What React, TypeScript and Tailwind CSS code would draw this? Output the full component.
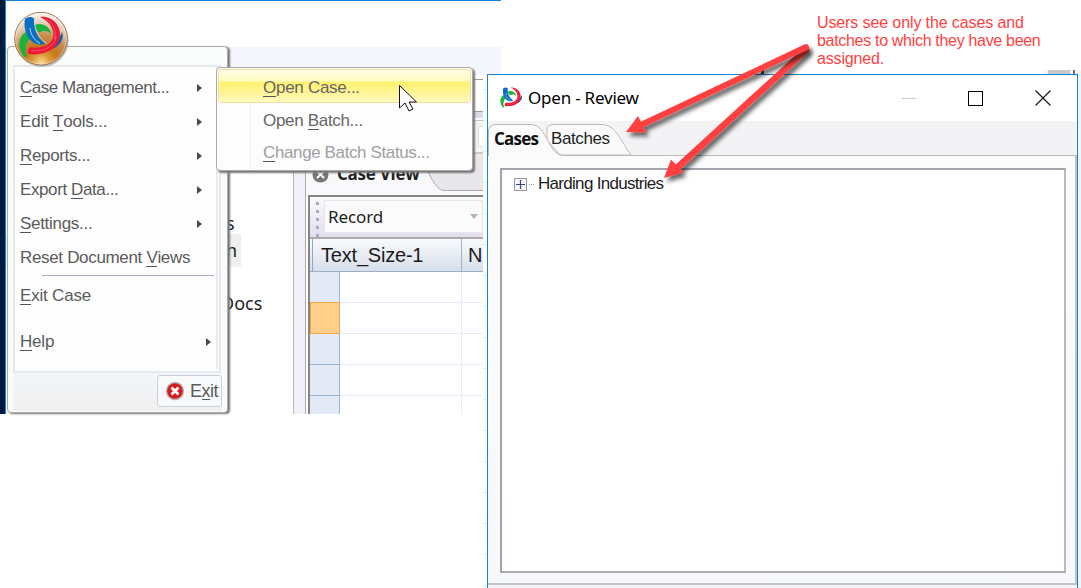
import React from "react";

type Part = string | { u: string };

function Mnemonic({ parts }: { parts: Part[] }) {
  return (
    <>
      {parts.map((p, i) =>
        typeof p === "string" ? (
          <span key={i}>{p}</span>
        ) : (
          <span key={i} className="inline-block h-[19px] border-b border-[#555] leading-[20px]">
            {p.u}
          </span>
        ),
      )}
    </>
  );
}

function MenuItem({ parts, arrow, className }: { parts: Part[]; arrow?: string; className: string }) {
  return (
    <div className={`flex h-[34px] shrink-0 items-center justify-between whitespace-pre pl-[5px] ${className}`}>
      <div className="leading-[20px]">
        <Mnemonic parts={parts} />
      </div>
      {arrow && (
        <svg className={arrow} width="5" height="8" viewBox="0 0 5 8">
          <path d="M0 0L5 4L0 8Z" fill="#4a4a4a" />
        </svg>
      )}
    </div>
  );
}

function Swirl() {
  return (
    <>
      <path d="M62 54C82 40 112 50 118 78C108 68 94 66 80 74Z" fill="#1cb240" />
      <path d="M56 68C24 72 10 108 36 146C42 148 46 146 44 142C36 122 44 96 62 86Z" fill="#1cb240" />
      <path d="M150 72C158 92 144 112 124 122L132 98C142 90 146 84 150 72Z" fill="#155fae" />
      <path d="M39 33C47 25 60 25 67 32C65 60 73 86 100 107C84 114 64 108 53 94C39 76 35 52 39 33Z" fill="#0a70c6" />
      <path d="M68 34C67 64 78 90 104 106M54 60C56 80 66 96 84 106" fill="none" stroke="#eee" strokeOpacity=".75" strokeWidth="3" />
      <path
        d="M84 27C114 22 142 46 144 76C146 112 110 146 50 138C46 130 48 120 56 118C92 122 120 110 124 84C126 62 112 40 84 27Z"
        fill="#f01834"
      />
      <path d="M58 128C96 132 126 116 133 86M100 32C124 46 134 66 128 92" fill="none" stroke="#ffb0a8" strokeOpacity=".6" strokeWidth="2" />
    </>
  );
}

function AppOrb() {
  return (
    <svg className="absolute left-[12px] top-[8px]" width="60" height="62" viewBox="0 0 180 186">
      <defs>
        <radialGradient id="orb" cx="50%" cy="96%" r="95%">
          <stop offset="0" stopColor="#ffd992" />
          <stop offset=".18" stopColor="#dc9a3c" />
          <stop offset=".34" stopColor="#c57818" />
          <stop offset=".56" stopColor="#c98d4e" />
          <stop offset=".76" stopColor="#e3c9ae" />
          <stop offset="1" stopColor="#fbf7f2" />
        </radialGradient>
      </defs>
      <circle cx="90" cy="97" r="80" fill="#777" fillOpacity=".45" />
      <circle cx="87" cy="92" r="79" fill="url(#orb)" stroke="#a0744c" strokeWidth="3" />
      <circle cx="87" cy="92" r="76" fill="none" stroke="#fff" strokeOpacity=".4" strokeWidth="3" />
      <Swirl />
    </svg>
  );
}

function ApplicationMenu() {
  return (
    <div className="absolute left-[7px] top-[46px] flex h-[367px] w-[221px] flex-col rounded-sm border border-[#aaa] bg-[#fafbfb] px-[5px] pt-[18px] text-[17px] text-[#5b5b5b] shadow-[2px_1px_2px_#777]">
      <div className="flex h-[308px] w-[208px] shrink-0 flex-col border-2 border-[#e5eaee] bg-[#fdfdfd]">
        <div className="flex h-[302px] w-[203px] flex-col border-r-2 border-[#e8ecf1] pt-[4px]">
          <MenuItem parts={[{ u: "C" }, "ase Management..."]} arrow="mr-[14px]" className="tracking-[-0.48px]" />
          <MenuItem parts={["Edit ", { u: "T" }, "ools..."]} arrow="mr-[14px]" className="tracking-[-0.2px]" />
          <MenuItem parts={[{ u: "R" }, "eports..."]} arrow="mr-[14px]" className="tracking-[-0.35px]" />
          <MenuItem parts={["Export ", { u: "D" }, "ata..."]} arrow="mr-[14px]" className="tracking-[-0.4px]" />
          <MenuItem parts={[{ u: "S" }, "ettings..."]} arrow="mr-[14px]" className="tracking-[-0.3px]" />
          <MenuItem parts={["Reset Document ", { u: "V" }, "iews"]} className="tracking-[-0.33px]" />
          <div className="ml-[27px] h-px w-[172px] shrink-0 bg-[#a9adc2]" />
          <div className="h-[3px] shrink-0" />
          <MenuItem parts={[{ u: "E" }, "xit Case"]} className="tracking-[-0.2px]" />
          <div className="h-[12px] shrink-0" />
          <MenuItem parts={[{ u: "H" }, "elp"]} arrow="mr-[5px]" className="tracking-[-0.2px]" />
        </div>
      </div>
      <div className="flex h-[38px] w-[209px] items-start justify-end bg-linear-to-b from-[#f3f5f8] to-[#f0f0f0]">
        <div className="mt-[2px] flex h-[32px] w-[65px] items-center gap-[5px] rounded-[3px] border border-[#cbd0d9] bg-[#f8f9fb] pl-[7px]">
          <svg className="shrink-0" width="20" height="20" viewBox="0 0 20 20">
            <circle cx="10" cy="10" r="9.2" fill="#b4b4b4" />
            <circle cx="10" cy="10" r="7.8" fill="#d71b1b" />
            <path d="M6.5 6.5L13.5 13.5M13.5 6.5L6.5 13.5" stroke="#fff" strokeWidth="2.8" />
          </svg>
          <span className="whitespace-nowrap text-[18px] leading-[20px] tracking-[-0.5px]">
            <Mnemonic parts={["E", { u: "x" }, "it"]} />
          </span>
        </div>
      </div>
    </div>
  );
}

function Submenu() {
  return (
    <div className="absolute left-[216px] top-[67px] h-[104px] w-[257px] rounded-[4px] border border-[#aaa] bg-[#fdfdfd] p-px text-[17px] text-[#666] shadow-[2px_2px_2px_#777]">
      <div className="flex h-[34px] items-center rounded-[3px] border border-[#f1dda4] bg-[linear-gradient(#fffde6_0px,#fffbc0_11px,#fff270_12px,#fff59a_24px,#fffbc5_33px)] pl-[44px] pt-[4px]">
        <span className="whitespace-pre tracking-[-0.28px]">
          <Mnemonic parts={[{ u: "O" }, "pen Case..."]} />
        </span>
      </div>
      <div className="flex h-[66px] pl-[32px]">
        <div className="flex flex-col border-l border-[#ededed] pl-[12px] pt-px">
          <span className="flex h-[33px] items-center whitespace-pre tracking-[-0.32px]">
            <Mnemonic parts={["Open ", { u: "B" }, "atch..."]} />
          </span>
          <span className="flex h-[33px] items-center whitespace-pre tracking-[-0.38px] text-[#a0a0a0]">
            <Mnemonic parts={[{ u: "C" }, "hange Batch Status..."]} />
          </span>
        </div>
      </div>
    </div>
  );
}

function RecordGrid() {
  return (
    <div className="flex flex-1 flex-col border-l-2 border-t-2 border-[#858585] bg-white">
      <div className="flex h-[42px] shrink-0 items-start border-b-2 border-[#aaa] bg-linear-to-b from-[#fafafc] to-[#e1dfea] pt-[3px]">
        <div className="flex w-[14px] flex-col items-center gap-[5px] pt-[2px]">
          {[0, 1, 2, 3, 4].map((i) => (
            <span key={i} className="h-[3px] w-[3px] bg-[#aaa9cb]" />
          ))}
        </div>
        <div className="flex h-[33px] flex-1 items-center justify-between border border-[#e5e5ef] bg-[#fbfbfb] pl-[3px] pr-[4px]">
          <span className="font-['Noto_Sans',sans-serif] text-[17px] tracking-[-0.1px] text-[#222]">Record</span>
          <svg width="8" height="5" viewBox="0 0 8 5">
            <path d="M0 0H8L4 5Z" fill="#b4b4b4" />
          </svg>
        </div>
      </div>
      <div className="flex h-[33px] shrink-0 border-b border-[#9bb0c7] bg-linear-to-b from-[#f8fafc] to-[#d8dfeb] font-['Liberation_Sans',sans-serif] text-[20px] leading-[33px] text-[#1a1a1a]">
        <div className="w-[3px] border-r border-[#8caac8]" />
        <div className="w-[149px] border-r border-[#9bb5cd] pl-[8px] tracking-[-0.2px]">Text_Size-1</div>
        <div className="overflow-hidden pl-[6px]">N</div>
      </div>
      {[0, 1, 2, 3, 4].map((i) => (
        <div key={i} className="flex h-[31px] shrink-0">
          <div
            className={
              i === 1
                ? "-mt-px h-[32px] w-[30px] border border-[#f4a142] bg-[#ffd08a]"
                : "w-[30px] border-b border-r border-[#9db5cd] bg-[#e3eaf5]"
            }
          />
          <div className="w-[122px] border-b border-r border-[#e5edfa]" />
          <div className="flex-1 border-b border-[#e5edfa]" />
        </div>
      ))}
    </div>
  );
}

function MainWindow() {
  return (
    <div className="absolute left-0 top-0 flex h-[414px] w-[501px] overflow-hidden">
      <div className="w-[6px] shrink-0 border-r border-[#1683d8] bg-[#001a3a]" />
      <div className="flex flex-1 flex-col border-t border-[#1683d8]">
        <div className="h-[46px] shrink-0" />
        <div className="h-[28px] shrink-0 bg-[#f5f6fb]" />
        <div className="flex h-[340px] w-[477px] shrink-0 overflow-hidden">
          <div className="flex w-[288px] shrink-0 flex-col border-r border-[#b5b5bb] pt-[132px] font-['Noto_Sans',sans-serif] text-[18px] text-[#222]">
            <div className="h-[27px] pl-[220px] leading-[33px]">s</div>
            <div className="h-[33px] w-[235px] bg-[#efefef] pl-[220px] leading-[32px]">n</div>
            <div className="h-[60px] pl-[215px] pt-[21px] leading-[30px]">Docs</div>
          </div>
          <div className="w-[12px] shrink-0 border-r border-[#aaa] bg-[#f2f1f7]" />
          <div className="flex flex-1 flex-col">
            <div className="mt-[4px] h-[33px] shrink-0 border-b border-t border-[#999] bg-white" />
            <div className="flex h-[41px] shrink-0 flex-col border-b border-[#ccc]">
              <div className="h-[6px] bg-[#dcdbea]" />
              <div className="mt-[2px] flex flex-1 justify-end border-t border-[#c4c4c8] bg-[#f4f4f6] py-[5px]">
                <div className="w-[5px] border border-r-0 border-[#dedee4] bg-white" />
              </div>
            </div>
            <div className="relative flex h-[42px] shrink-0 bg-[#f9f9fb]">
              <svg className="absolute inset-0" width="180" height="42" viewBox="0 0 180 42">
                <path d="M112 0C122 16 128 37 138 37.5H180V0Z" fill="#e8e7ec" stroke="#aaa" />
              </svg>
              <div className="relative flex items-center gap-[8px] pl-[6px]">
                <svg width="17" height="17" viewBox="0 0 17 17">
                  <circle cx="8.5" cy="8.5" r="8" fill="#777" />
                  <path d="M5 5L12 12M12 5L5 12" stroke="#fff" strokeWidth="2" />
                </svg>
                <span className="whitespace-nowrap font-['Open_Sans',sans-serif] text-[17px] font-bold tracking-[-0.25px] text-[#222]">
                  Case View
                </span>
              </div>
            </div>
            <div className="flex flex-1 pl-[2px]">
              <RecordGrid />
            </div>
          </div>
        </div>
      </div>
    </div>
  );
}

function DialogTabs() {
  return (
    <div className="relative flex h-[35px] shrink-0 bg-[#f3f3f6] text-[17px]">
      <svg className="absolute inset-0" width="589" height="35" viewBox="0 0 589 35">
        <path d="M59 19V9Q59 3.5 66 3.5H113C128 3 133 21 143 34H72Z" fill="#fafafa" stroke="#bbb" />
        <path d="M.5 36V10Q1 3.5 8 3.5H43C59 3.5 60 34 75 34.5H590V36Z" fill="#fbfbfb" stroke="#bbb" />
      </svg>
      <span className="relative pl-[6px] font-['Open_Sans',sans-serif] text-[17px] font-bold leading-[36px] tracking-[-0.8px] text-[#111]">
        Cases
      </span>
      <span className="relative ml-[13px] leading-[35px] tracking-[-0.4px] text-[#222]">Batches</span>
    </div>
  );
}

function OpenDialog() {
  return (
    <div className="absolute left-[487px] top-[74px] flex h-[514px] w-[591px] flex-col border-x border-t border-[#1683d8] bg-[#f4f4f8]">
      <div className="flex h-[46px] shrink-0 items-center bg-white pl-[10px] pr-[26px]">
        <svg className="mt-[-2px]" width="26" height="25" viewBox="8 18 156 138">
          <Swirl />
        </svg>
        <span className="ml-[4px] whitespace-pre font-['Noto_Sans',sans-serif] text-[17px] tracking-[-0.22px]">Open - Review</span>
        <div className="ml-auto flex items-center gap-[52px]">
          <div className="h-px w-[15px] bg-[#ccc]" />
          <div className="h-[15px] w-[15px] border border-black" />
          <svg width="16" height="16" viewBox="0 0 16 16">
            <path d="M.5 .5L15.5 15.5M15.5 .5L.5 15.5" stroke="#111" strokeWidth="1.1" />
          </svg>
        </div>
      </div>
      <DialogTabs />
      <div className="flex h-[429px] shrink-0 border-b-2 border-r-2 border-[#c2c3c7] bg-linear-to-b from-[#fbfbfb] to-[#f7f8fc] pb-[10px] pl-[12px] pr-[9px] pt-[12px]">
        <div className="flex-1 border-2 border-b-[#a9aab2] border-l-[#a2a3ab] border-r-[#b9babf] border-t-[#a2a3ab] bg-white">
          <div className="flex items-center pl-[12px] pt-[4px]">
            <div className="flex h-[13px] w-[13px] items-center justify-center border border-[#999] bg-[#f5f5f5]">
              <svg width="9" height="9" viewBox="0 0 9 9">
                <path d="M0 4.5H9M4.5 0V9" stroke="#34487f" strokeWidth="1.2" />
              </svg>
            </div>
            <span className="ml-[2px] w-[5px] border-t border-dotted border-[#999]" />
            <span className="ml-[4px] text-[17px] leading-[20px] tracking-[-0.7px] text-[#222]">Harding Industries</span>
          </div>
        </div>
      </div>
    </div>
  );
}

export default function App() {
  return (
    <div className="relative h-[588px] w-[1081px] overflow-hidden bg-white font-['Liberation_Sans',sans-serif] text-black">
      <MainWindow />
      <div className="absolute left-[483px] top-[89px] flex flex-col gap-[30px]">
        {[0, 1, 2, 3, 4, 5, 6, 7, 8, 9, 10, 11, 12, 13, 14, 15, 16].map((i) => (
          <span key={i} className="h-px w-[4px] bg-[#dfebfa]" />
        ))}
      </div>
      <ApplicationMenu />
      <AppOrb />
      <Submenu />
      <svg className="absolute left-[398px] top-[84px]" width="21" height="29" viewBox="0 0 21 29">
        <path d="M1.5 1.5V24L7 19L11 27L15 25L11 18H18.5Z" fill="#fff" stroke="#111" />
      </svg>
      <div className="absolute left-[1045px] top-[70px] flex h-[4px] w-[33px] justify-between bg-[#f1f1f5] pl-[3px] pr-[3px]">
        <span className="w-[22px] bg-[#c9c9c9]" />
        <span className="w-[2px] bg-[#777]" />
      </div>
      <OpenDialog />
      <div className="absolute left-[1078px] top-[70px] h-[518px] w-[3px] bg-[#f5f5f8]" />
      <svg className="absolute left-[615px] top-[36px]" width="205" height="160" viewBox="615 36 205 160">
        <defs>
          <filter id="shadow" x="-20%" y="-20%" width="150%" height="150%">
            <feDropShadow dx="3" dy="4" stdDeviation="2" floodOpacity=".6" />
          </filter>
        </defs>
        <rect x="761" y="70" width="3" height="4" fill="#444" />
        <g filter="url(#shadow)">
          <path d="M806 50L679 166" stroke="#ff4141" strokeWidth="6.5" strokeLinecap="round" />
          <path d="M664 178L671 159.500L683.500 172.500Z" fill="#ff4141" />
        </g>
        <g filter="url(#shadow)">
          <path d="M806 47L641 125" stroke="#ff4141" strokeWidth="6" strokeLinecap="round" />
          <path d="M626 132L638 116L646 132.500Z" fill="#ff4141" />
        </g>
      </svg>
      <div className="absolute left-[817px] top-[14px] w-[245px] whitespace-pre text-[16px] leading-[18px] text-[#ff4141]">
        <div className="tracking-[-0.11px]">Users see only the cases and</div>
        <div className="tracking-[-0.31px]">batches to which they have been</div>
        <div className="tracking-[-0.15px]">assigned.</div>
      </div>
    </div>
  );
}
